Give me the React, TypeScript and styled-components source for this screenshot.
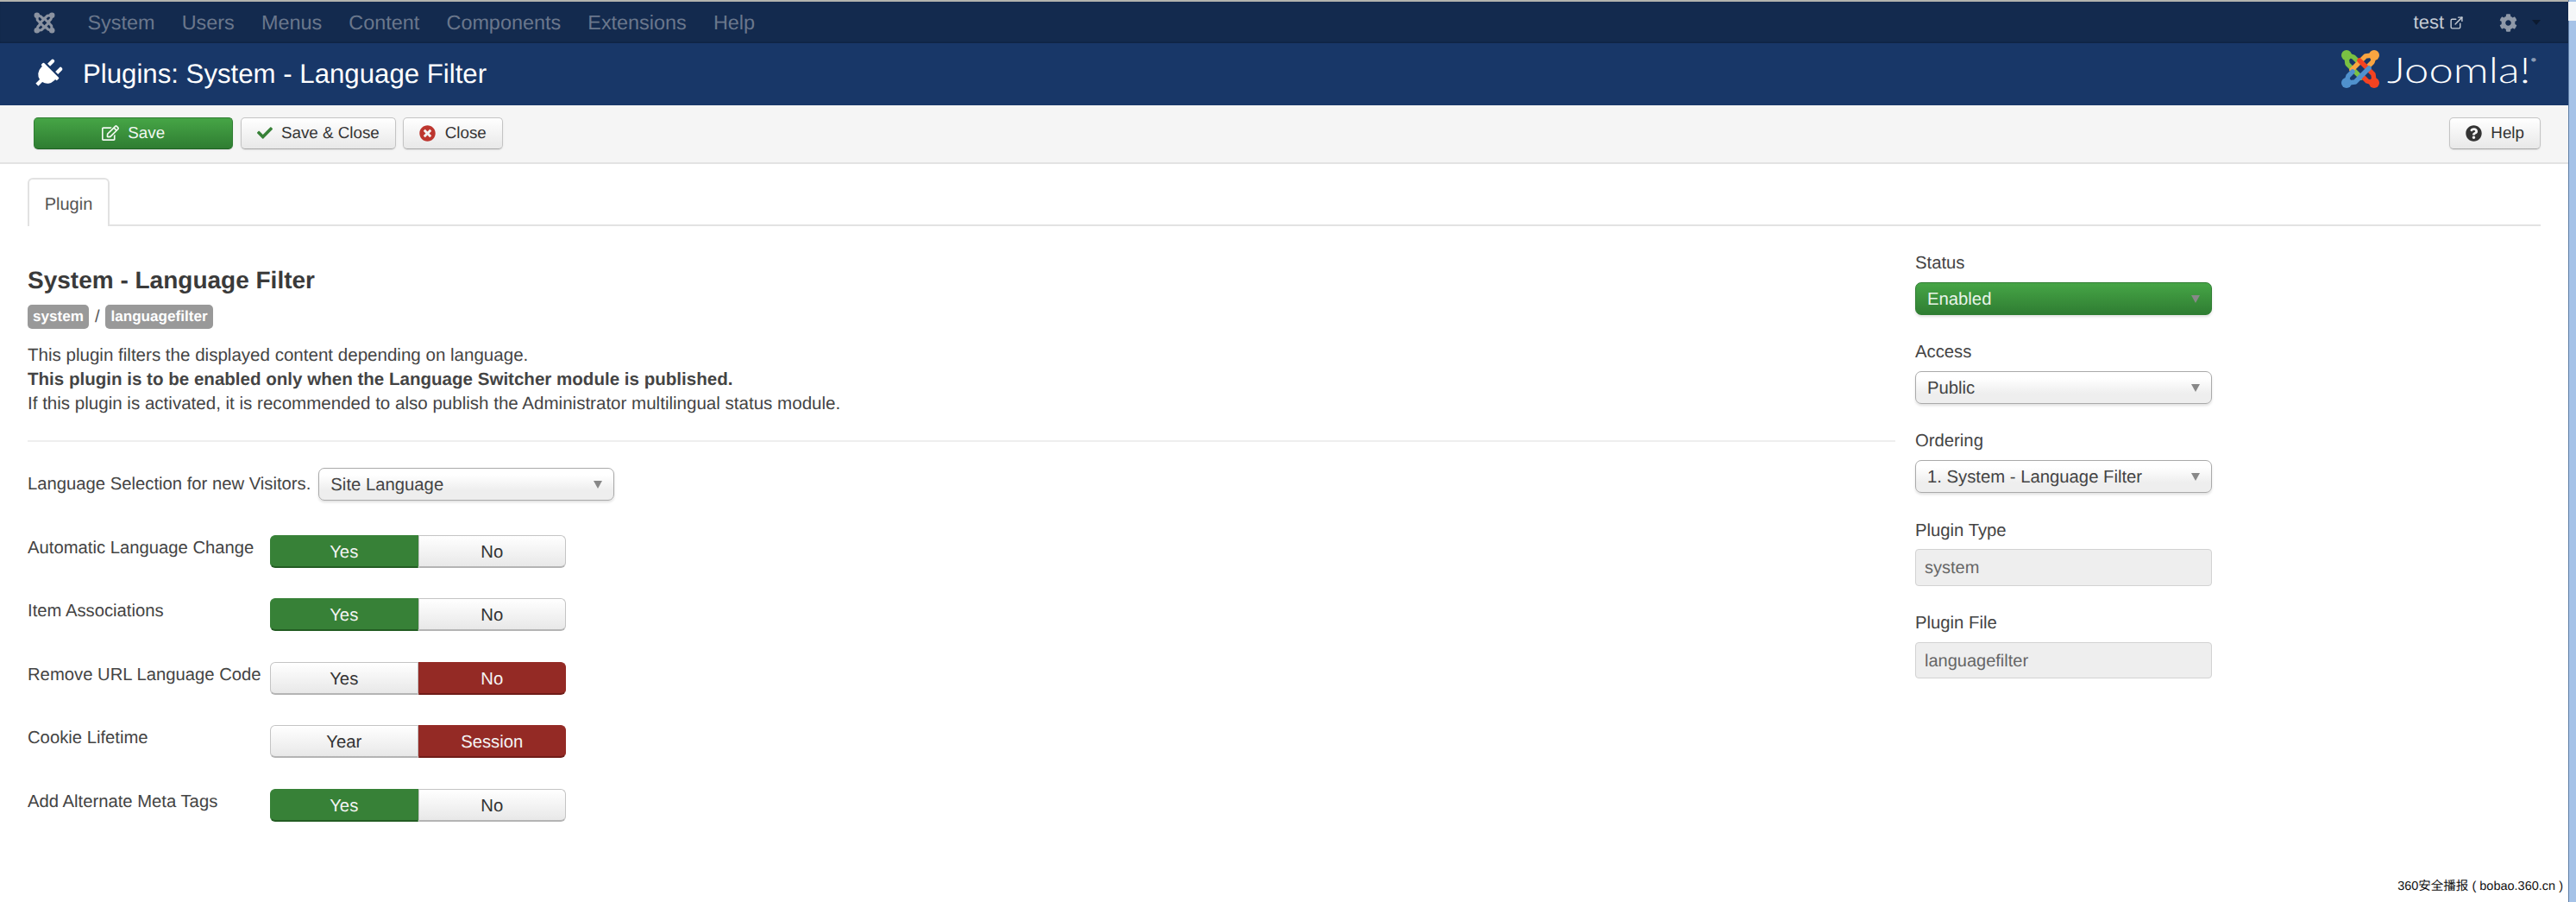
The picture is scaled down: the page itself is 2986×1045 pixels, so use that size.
import React, {FunctionComponent} from 'react';
import styled, {createGlobalStyle} from 'styled-components';
import {FaCheck, FaCog, FaPlug, FaQuestionCircle, FaRegEdit, FaTimesCircle} from 'react-icons/fa';
import {FiExternalLink} from 'react-icons/fi';

const GlobalStyle = createGlobalStyle`
  html, body {
    margin: 0;
    padding: 0;
    height: 100%;
    background: #fff;
  }
  body {
    font-family: "Liberation Sans", Arial, sans-serif;
    color: #333;
    overflow: hidden;
    text-rendering: geometricPrecision;
  }
  * {
    box-sizing: border-box;
  }
`

/* ====== Containers ====== */

const Page = styled.div`
  position: relative;
  display: flex;
  width: 2986px;
  height: 1045px;
  overflow: hidden;
`

const Main = styled.div`
  flex: 1;
  min-width: 0;
`

const TopBar = styled.nav`
  display: flex;
  align-items: center;
  height: 50px;
  padding: 0 32px 0 39px;
  background: #132a4e;
  border-top: 2px solid #b3b3ae;
  box-shadow: inset 0 -2px 3px -2px #0b1a33;
`

const NavMenu = styled.div`
  display: flex;
  gap: 31.2px;
  margin-left: 37.5px;
  font-size: 23.4px;
  color: #6a778c;
`

const NavRight = styled.div`
  display: flex;
  align-items: center;
  margin-left: auto;
  color: #c5cbd4;
  font-size: 22px;
`

const Header = styled.header`
  display: flex;
  align-items: center;
  height: 72px;
  padding: 0 39px 0 40px;
  background: #183768;
  color: #fff;
`

const Toolbar = styled.div`
  display: flex;
  align-items: center;
  gap: 8.5px;
  height: 68px;
  padding: 0 32px 2px 39px;
  background: #f5f5f5;
  border-bottom: 2px solid #e3e3e3;
`

const Content = styled.main`
  padding: 16px 32px 0;
`

const TabBar = styled.div`
  display: flex;
  height: 56px;
  border-bottom: 2px solid #e2e2e2;
`

const Columns = styled.div`
  display: grid;
  grid-template-columns: 2165px 344px;
  column-gap: 23px;
`

const LeftColumn = styled.section`
  padding-top: 43px;
`

const RightColumn = styled.aside`
  padding-top: 29px;
`

const FormRow = styled.div`
  display: flex;
  align-items: flex-start;
  height: 38px;
  margin-bottom: 35.5px;
`

const LanguageRow = styled.div`
  display: flex;
  align-items: center;
  gap: 9px;
  margin-bottom: 39.5px;
`

const Field = styled.div`
  margin-bottom: 29.6px;
`

const ScrollTrack = styled.div`
  flex: none;
  width: 9px;
  background: #a6c3e8;
  border-left: 1px solid #5f7ea6;
`

const ScrollArrow = styled.div`
  height: 22px;
  margin: 2px 0 0 -1px;
  background: #f4f6f8;
`

/* ====== UI Elements ====== */

const Button = styled.div<{$primary?: boolean; $width?: number}>`
  display: flex;
  align-items: center;
  justify-content: center;
  gap: 10.5px;
  height: 37px;
  padding: 0 18px;
  width: ${p => (p.$width ? `${p.$width}px` : 'auto')};
  font-size: 18.8px;
  color: ${p => (p.$primary ? '#f2f8f2' : '#333')};
  background: ${p => (p.$primary ? 'linear-gradient(#46a546, #2f7d32)' : 'linear-gradient(#fff, #e8e8e8)')};
  border: 1px solid ${p => (p.$primary ? '#2f7d32' : '#c4c4c4')};
  border-bottom-color: ${p => (p.$primary ? '#1f5f23' : '#a8a8a8')};
  border-radius: 5px;
  box-shadow: 0 1px 2px rgba(0, 0, 0, 0.08);
`

const HelpButton = styled(Button)`
  margin-left: auto;
`

const Tab = styled.div`
  height: 56px;
  width: 95px;
  padding-top: 15px;
  text-align: center;
  font-size: 20px;
  line-height: 28px;
  color: #555;
  background: #fff;
  border: 2px solid #e2e2e2;
  border-bottom: 0;
  border-radius: 6px 6px 0 0;
`

const Badge = styled.span`
  display: inline-block;
  height: 28px;
  padding: 0 6px;
  font-size: 17.1px;
  font-weight: bold;
  line-height: 28px;
  color: #fff;
  background: #999;
  border-radius: 5px;
`

const Divider = styled.hr`
  height: 2px;
  margin: 28px 0 30px;
  background: #eee;
  border: 0;
`

const SelectBox = styled.div<{$success?: boolean; $width: number}>`
  position: relative;
  width: ${p => p.$width}px;
  height: 38px;
  padding-left: 13px;
  font-size: 20.3px;
  line-height: 39px;
  color: ${p => (p.$success ? '#e9f4e9' : '#444')};
  background: ${p => (p.$success ? 'linear-gradient(#46a546, #2f7d32)' : 'linear-gradient(#fff 20%, #eee 70%)')};
  border: 1px solid ${p => (p.$success ? '#2f7d32' : '#aaa')};
  border-radius: 7px;
  box-shadow: 0 2px 3px rgba(0, 0, 0, 0.12);

  &::after {
    content: '';
    position: absolute;
    top: 14px;
    right: 13px;
    border: 5.5px solid transparent;
    border-top: 9px solid #888;
    border-bottom: 0;
  }
`

const ReadonlyInput = styled.div`
  height: 42.5px;
  padding-left: 10px;
  font-size: 20px;
  line-height: 43px;
  color: #666;
  background: #eee;
  border: 1px solid #d2d2d2;
  border-radius: 4px;
`

const Toggle = styled.div`
  display: flex;
  width: 343px;
  height: 38px;
`

const ToggleOption = styled.div<{$tone?: 'success' | 'danger'}>`
  flex: 1;
  text-align: center;
  font-size: 20.3px;
  line-height: 38.5px;
  color: ${p => (p.$tone ? '#f4f4f4' : '#333')};
  background: ${p =>
    p.$tone === 'success' ? '#378137' : p.$tone === 'danger' ? '#942a25' : 'linear-gradient(#fff, #e8e8e8)'};
  border: 1px solid ${p => (p.$tone === 'success' ? '#378137' : p.$tone === 'danger' ? '#942a25' : '#c4c4c4')};
  border-bottom: 2px solid ${p => (p.$tone === 'success' ? '#235c23' : p.$tone === 'danger' ? '#6f1c18' : '#b4b4b4')};

  &:first-child {
    border-radius: 6px 0 0 6px;
  }
  &:last-child {
    border-radius: 0 6px 6px 0;
  }
`

const Caret = styled.span`
  margin-left: 17px;
  border: 5.5px solid transparent;
  border-top: 6px solid #0c1a30;
  border-bottom: 0;
`

/* ====== Text Elements ====== */

const PageTitle = styled.h1`
  margin: 0 0 0 26px;
  font-size: 31.2px;
  font-weight: normal;
`

const PluginTitle = styled.h2`
  margin: 0 0 8px;
  font-size: 28px;
  font-weight: bold;
  line-height: 40px;
  color: #3a3a3a;
`

const BadgeLine = styled.div`
  display: flex;
  align-items: center;
  gap: 7px;
  height: 28px;
  margin-bottom: 17px;
  font-size: 20px;
  color: #555;
`

const Description = styled.div`
  font-size: 20.55px;
  line-height: 28px;
  color: #444;
`

const FormLabel = styled.div<{$inline?: boolean}>`
  flex: none;
  width: ${p => (p.$inline ? 'auto' : '281px')};
  font-size: 20.25px;
  line-height: 30px;
  color: #444;
`

const FieldLabel = styled.div`
  margin-bottom: 6.6px;
  font-size: 20.3px;
  line-height: 29px;
  color: #444;
`

const LogoText = styled.span`
  display: inline-block;
  width: 171px;
  margin-left: 8px;
  font-family: Lato, "Liberation Sans", sans-serif;
  font-size: 41px;
  font-weight: 300;
  line-height: 1;
  white-space: nowrap;
  transform: scaleX(1.24);
  transform-origin: left center;
`

const RegMark = styled.sup`
  font-size: 9px;
  color: #8a9bb5;
  vertical-align: 24px;
`

const Watermark = styled.div`
  position: absolute;
  right: 15px;
  bottom: 9px;
  font-family: "Liberation Sans", "Noto Sans CJK SC", sans-serif;
  font-size: 14.5px;
  line-height: 18px;
  color: #111;
  text-shadow: 0 0 2px #fff;
`

/* ====== Icons ====== */

const LogoBox = styled.div`
  display: flex;
  align-items: center;
  margin-left: auto;
  margin-bottom: 12px;
`

const PlugIcon = styled(FaPlug)`
  flex: none;
  width: 30px;
  height: 30px;
  transform: rotate(45deg) scale(1.15);
`

const hookColors = ['#7ac143', '#f9a541', '#f44321', '#5091cd'];

const JoomlaMark: FunctionComponent<{size: number; colors: string[]}> = ({size, colors}) => (
  <svg width={size} height={size} viewBox="0 0 46 46" fill="none">
    {colors.map((color, i) => (
      <g key={i} transform={`rotate(${i * 90} 23 23)`} stroke={color} strokeWidth="5.5" strokeLinecap="round" strokeLinejoin="round">
        <circle cx="7" cy="7" r="6" fill={color} stroke="none" />
        <path d="M7 9 L8 17 L24 33" />
        <path d="M9 7 L15 9 L20 14" />
      </g>
    ))}
  </svg>
);

/* ====== Components ====== */

const navItems = ['System', 'Users', 'Menus', 'Content', 'Components', 'Extensions', 'Help'];

const toggles = [
  {label: 'Automatic Language Change', options: ['Yes', 'No'], active: 0, tone: 'success'},
  {label: 'Item Associations', options: ['Yes', 'No'], active: 0, tone: 'success'},
  {label: 'Remove URL Language Code', options: ['Yes', 'No'], active: 1, tone: 'danger'},
  {label: 'Cookie Lifetime', options: ['Year', 'Session'], active: 1, tone: 'danger'},
  {label: 'Add Alternate Meta Tags', options: ['Yes', 'No'], active: 0, tone: 'success'},
] as const;

const App: FunctionComponent = () => (
  <Page>
    <GlobalStyle />
    <Main>
      <TopBar>
        <JoomlaMark size={25} colors={['#8b93a1', '#8b93a1', '#8b93a1', '#8b93a1']} />
        <NavMenu>
          {navItems.map(item => (
            <span key={item}>{item}</span>
          ))}
        </NavMenu>
        <NavRight>
          test
          <FiExternalLink size={17} style={{marginLeft: 6}} />
          <FaCog size={21} color="#8f99a8" style={{marginLeft: 41}} />
          <Caret />
        </NavRight>
      </TopBar>
      <Header>
        <PlugIcon />
        <PageTitle>Plugins: System - Language Filter</PageTitle>
        <LogoBox>
          <JoomlaMark size={46} colors={hookColors} />
          <LogoText>
            Joomla!<RegMark>●</RegMark>
          </LogoText>
        </LogoBox>
      </Header>
      <Toolbar>
        <Button $primary $width={231}>
          <FaRegEdit size={20} />
          Save
        </Button>
        <Button>
          <FaCheck size={18} color="#378137" />
          Save &amp; Close
        </Button>
        <Button>
          <FaTimesCircle size={19} color="#bd362f" />
          Close
        </Button>
        <HelpButton>
          <FaQuestionCircle size={19} color="#333" />
          Help
        </HelpButton>
      </Toolbar>
      <Content>
        <TabBar>
          <Tab>Plugin</Tab>
        </TabBar>
        <Columns>
          <LeftColumn>
            <PluginTitle>System - Language Filter</PluginTitle>
            <BadgeLine>
              <Badge>system</Badge>/<Badge>languagefilter</Badge>
            </BadgeLine>
            <Description>
              This plugin filters the displayed content depending on language.
              <br />
              <strong>This plugin is to be enabled only when the Language Switcher module is published.</strong>
              <br />
              If this plugin is activated, it is recommended to also publish the Administrator multilingual status module.
            </Description>
            <Divider />
            <LanguageRow>
              <FormLabel $inline>Language Selection for new Visitors.</FormLabel>
              <SelectBox $width={343}>Site Language</SelectBox>
            </LanguageRow>
            {toggles.map(row => (
              <FormRow key={row.label}>
                <FormLabel>{row.label}</FormLabel>
                <Toggle>
                  {row.options.map((option, i) => (
                    <ToggleOption key={option} $tone={i === row.active ? row.tone : undefined}>
                      {option}
                    </ToggleOption>
                  ))}
                </Toggle>
              </FormRow>
            ))}
          </LeftColumn>
          <RightColumn>
            <Field>
              <FieldLabel>Status</FieldLabel>
              <SelectBox $success $width={344}>Enabled</SelectBox>
            </Field>
            <Field>
              <FieldLabel>Access</FieldLabel>
              <SelectBox $width={344}>Public</SelectBox>
            </Field>
            <Field>
              <FieldLabel>Ordering</FieldLabel>
              <SelectBox $width={344}>1. System - Language Filter</SelectBox>
            </Field>
            <Field>
              <FieldLabel>Plugin Type</FieldLabel>
              <ReadonlyInput>system</ReadonlyInput>
            </Field>
            <Field>
              <FieldLabel>Plugin File</FieldLabel>
              <ReadonlyInput>languagefilter</ReadonlyInput>
            </Field>
          </RightColumn>
        </Columns>
      </Content>
    </Main>
    <ScrollTrack>
      <ScrollArrow />
    </ScrollTrack>
    <Watermark>360安全播报 ( bobao.360.cn )</Watermark>
  </Page>
);

export default App;
